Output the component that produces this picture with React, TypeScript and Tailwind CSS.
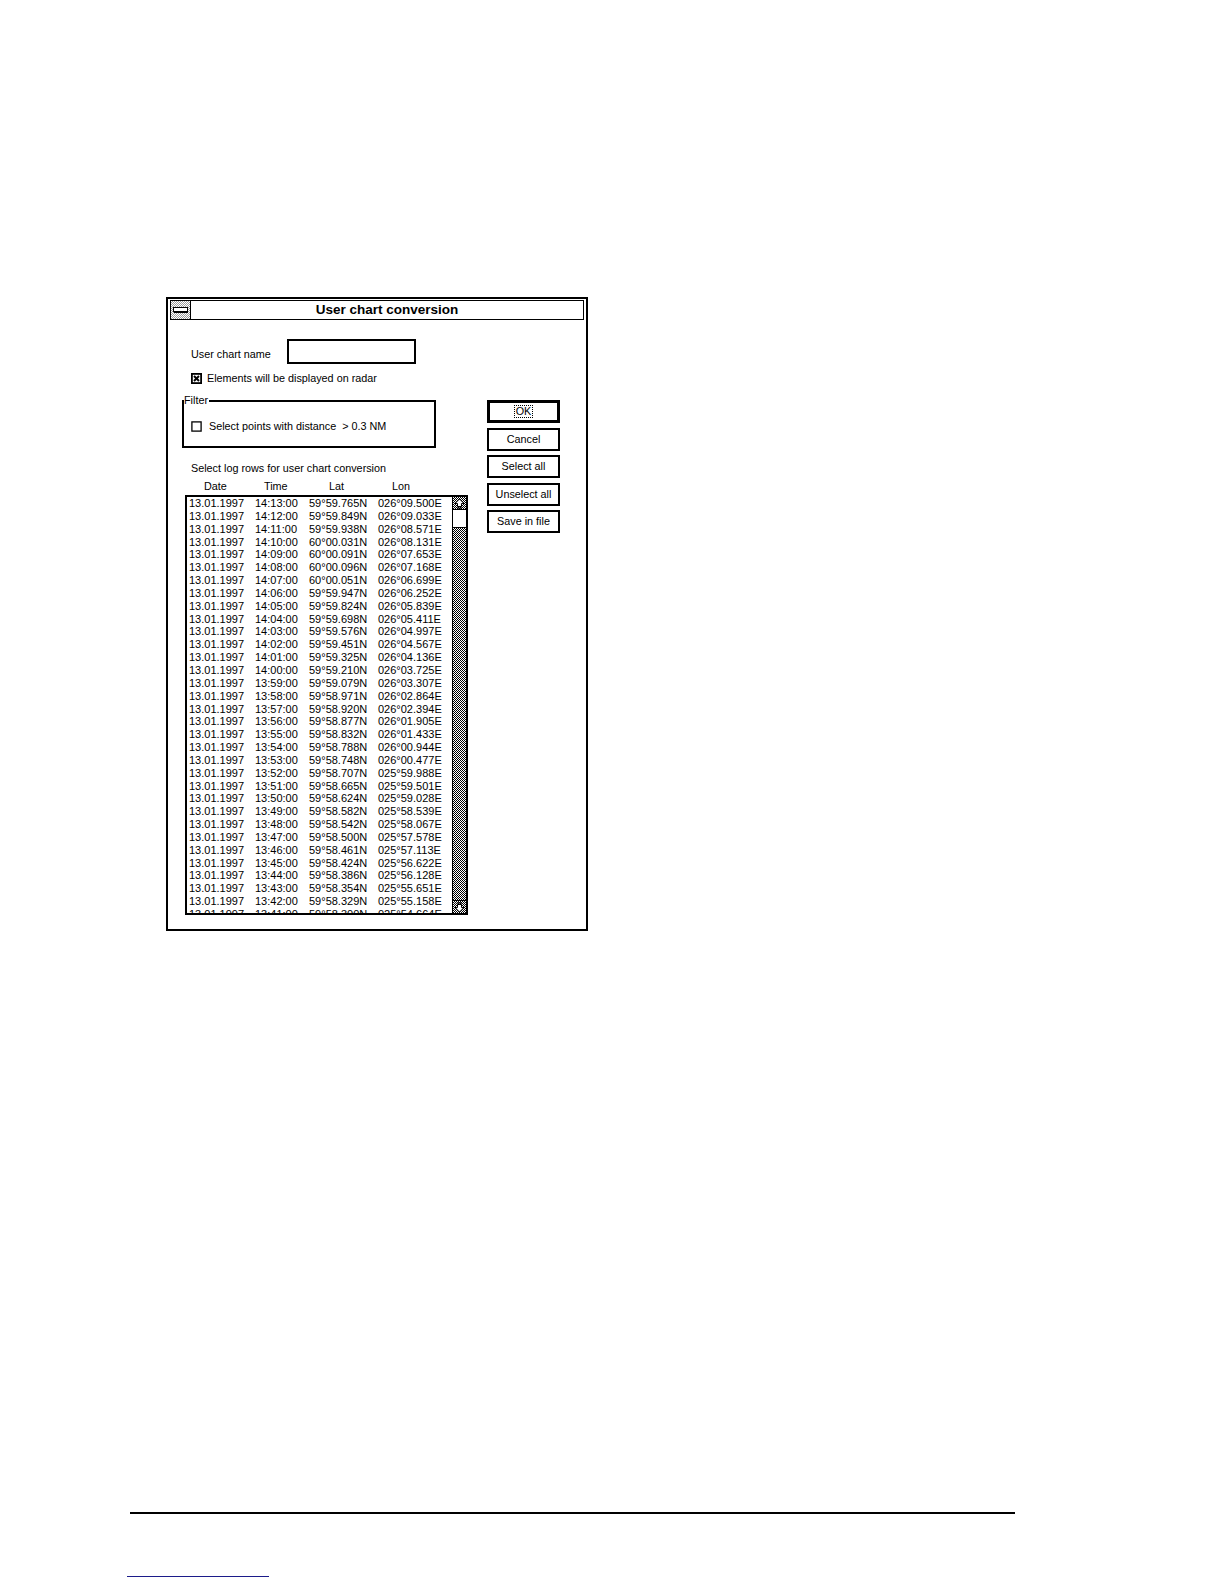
import React from 'react';

// log rows shown in the list: time, lat, lon (date is always the same)
const rows: [string, string, string][] = [
  ['14:13:00', '59°59.765N', '026°09.500E'],
  ['14:12:00', '59°59.849N', '026°09.033E'],
  ['14:11:00', '59°59.938N', '026°08.571E'],
  ['14:10:00', '60°00.031N', '026°08.131E'],
  ['14:09:00', '60°00.091N', '026°07.653E'],
  ['14:08:00', '60°00.096N', '026°07.168E'],
  ['14:07:00', '60°00.051N', '026°06.699E'],
  ['14:06:00', '59°59.947N', '026°06.252E'],
  ['14:05:00', '59°59.824N', '026°05.839E'],
  ['14:04:00', '59°59.698N', '026°05.411E'],
  ['14:03:00', '59°59.576N', '026°04.997E'],
  ['14:02:00', '59°59.451N', '026°04.567E'],
  ['14:01:00', '59°59.325N', '026°04.136E'],
  ['14:00:00', '59°59.210N', '026°03.725E'],
  ['13:59:00', '59°59.079N', '026°03.307E'],
  ['13:58:00', '59°58.971N', '026°02.864E'],
  ['13:57:00', '59°58.920N', '026°02.394E'],
  ['13:56:00', '59°58.877N', '026°01.905E'],
  ['13:55:00', '59°58.832N', '026°01.433E'],
  ['13:54:00', '59°58.788N', '026°00.944E'],
  ['13:53:00', '59°58.748N', '026°00.477E'],
  ['13:52:00', '59°58.707N', '025°59.988E'],
  ['13:51:00', '59°58.665N', '025°59.501E'],
  ['13:50:00', '59°58.624N', '025°59.028E'],
  ['13:49:00', '59°58.582N', '025°58.539E'],
  ['13:48:00', '59°58.542N', '025°58.067E'],
  ['13:47:00', '59°58.500N', '025°57.578E'],
  ['13:46:00', '59°58.461N', '025°57.113E'],
  ['13:45:00', '59°58.424N', '025°56.622E'],
  ['13:44:00', '59°58.386N', '025°56.128E'],
  ['13:43:00', '59°58.354N', '025°55.651E'],
  ['13:42:00', '59°58.329N', '025°55.158E'],
  ['13:41:00', '59°58.300N', '025°54.664E'],
];

const dither = 'bg-[repeating-conic-gradient(#000_0%_25%,#fff_0%_50%)] bg-[length:2px_2px]';

function ArrowBox({ down }: { down?: boolean }) {
  return (
    <div className={`h-[12px] ${dither} flex items-center justify-center`}>
      <svg width="11" height="11" viewBox="0 0 11 11" className={down ? 'rotate-180' : ''}>
        <polygon points="5.5,1 10,5.5 7.5,5.5 7.5,8.5 3.5,8.5 3.5,5.5 1,5.5" fill="#fff" stroke="#000" strokeWidth="1" />
        <rect x="3" y="9.5" width="5" height="1.2" fill="#000" />
      </svg>
    </div>
  );
}

function CheckBox({ checked }: { checked?: boolean }) {
  return (
    <svg width="11" height="11" viewBox="0 0 11 11" className="shrink-0">
      <rect x="0.9" y="0.9" width="9.2" height="9.2" fill="#fff" stroke="#000" strokeWidth={checked ? 1.8 : 1.3} />
      {checked && (
        <>
          <line x1="3" y1="3" x2="8" y2="8" stroke="#000" strokeWidth="1.9" />
          <line x1="8" y1="3" x2="3" y2="8" stroke="#000" strokeWidth="1.9" />
        </>
      )}
    </svg>
  );
}

function Button({ label, def }: { label: string; def?: boolean }) {
  return (
    <div
      className={`w-[73px] h-[23px] flex items-center justify-center border-black bg-white ${
        def ? 'border-[3px]' : 'border-2'
      }`}
    >
      {def ? (
        <span className="border border-dotted border-black px-px leading-[11px]">{label}</span>
      ) : (
        <span className="leading-[13px]">{label}</span>
      )}
    </div>
  );
}

export default function App() {
  return (
    <div className="w-[1224px] h-[1584px] bg-white flex flex-col items-start font-['Liberation_Sans',Arial,sans-serif] text-[10.8px] text-black">
      {/* dialog */}
      <div className="mt-[297px] ml-[166px] w-[422px] h-[634px] border-2 border-black flex flex-col">
        {/* title bar */}
        <div className="mt-px mx-[2px] h-[20px] border border-black flex">
          <div className="w-[20px] border-r border-black bg-[repeating-conic-gradient(#9a9a9a_0%_25%,#fff_0%_50%)] bg-[length:2px_2px] flex items-center justify-center">
            <svg width="15" height="6" viewBox="0 0 15 6">
              <rect x="0.5" y="0.5" width="14" height="4" fill="#fff" stroke="#000" strokeWidth="1" />
              <rect x="1" y="4.5" width="14" height="1.5" fill="#000" />
            </svg>
          </div>
          <div className="flex-1 flex items-center justify-center font-bold text-[13.5px] leading-none">
            User chart conversion
          </div>
        </div>

        {/* body */}
        <div className="flex">
          <div className="ml-[14px] w-[287px] flex flex-col">
            <div className="mt-[19px] flex items-start">
              <div className="w-[105px] pl-[9px] pt-[9px] leading-[13px]">User chart name</div>
              <div className="w-[129px] h-[25px] border-2 border-black bg-white" />
            </div>

            <div className="mt-[8px] h-[13px] pl-[9px] flex items-center">
              <CheckBox checked />
              <span className="ml-[5px] leading-[13px]">Elements will be displayed on radar</span>
            </div>

            {/* filter group */}
            <div className="relative mt-[15px] w-[254px] h-[48px] border-2 border-black">
              <span className="absolute left-0 top-[-8px] bg-white pr-px leading-[12px]">Filter</span>
              <div className="mt-[18px] h-[13px] pl-[7px] flex items-center">
                <CheckBox />
                <span className="ml-[7px] leading-[13px]">Select points with distance&nbsp; &gt; 0.3 NM</span>
              </div>
            </div>

            <div className="mt-[14px] pl-[9px] leading-[13px]">Select log rows for user chart conversion</div>

            <div className="mt-[5px] pl-[22px] flex leading-[13px]">
              <span className="w-[60px]">Date</span>
              <span className="w-[65px]">Time</span>
              <span className="w-[63px]">Lat</span>
              <span>Lon</span>
            </div>

            {/* list */}
            <div className="mt-[2px] ml-[3px] w-[283px] h-[420px] border-2 border-black flex overflow-hidden text-[11px]">
              <div className="flex-1 pl-[2px] overflow-hidden">
                {rows.map(([time, lat, lon]) => (
                  <div key={time} className="h-[12.85px] leading-[12.85px] flex whitespace-nowrap">
                    <span className="w-[66px]">13.01.1997</span>
                    <span className="w-[54px]">{time}</span>
                    <span className="w-[69px]">{lat}</span>
                    <span>{lon}</span>
                  </div>
                ))}
              </div>
              <div className="w-[14px] border-l border-black flex flex-col">
                <ArrowBox />
                <div className="h-[19px] bg-white border-y border-black" />
                <div className={`flex-1 ${dither}`} />
                <div className="border-t border-black">
                  <ArrowBox down />
                </div>
              </div>
            </div>
          </div>

          {/* buttons */}
          <div className="ml-[18px] mt-[80px] flex flex-col gap-[4.5px]">
            <Button label="OK" def />
            <Button label="Cancel" />
            <Button label="Select all" />
            <Button label="Unselect all" />
            <Button label="Save in file" />
          </div>
        </div>
      </div>

      {/* page footer rules */}
      <div className="mt-[581px] ml-[130px] w-[885px] h-[1.5px] bg-black" />
      <div className="mt-[62px] ml-[127px] w-[142px] h-px bg-[#1c1c8a]" />
    </div>
  );
}
